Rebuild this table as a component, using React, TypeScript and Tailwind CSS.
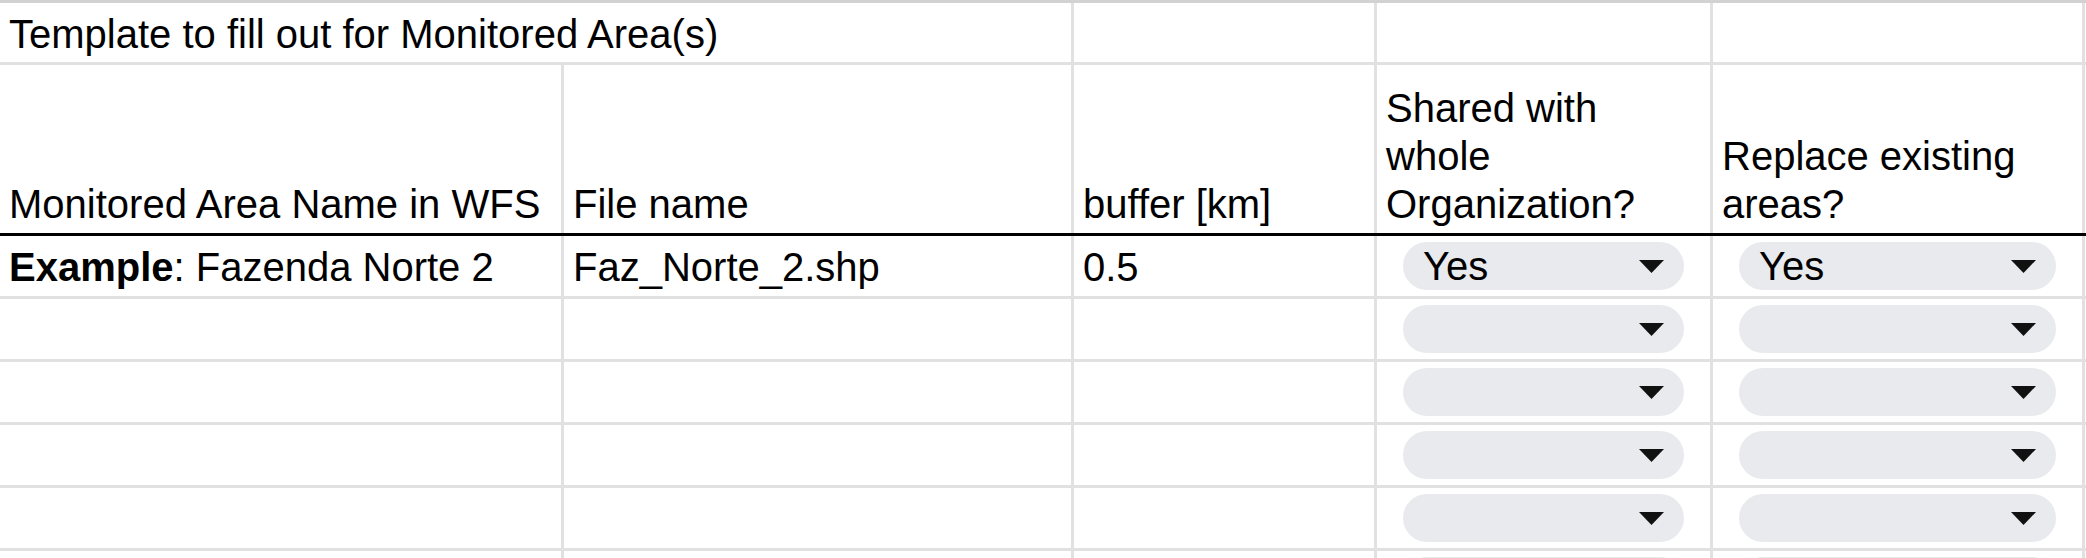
import React from "react";

const columns = [
  "w-[564px] shrink-0 border-r-[3px]",
  "w-[510px] shrink-0 border-r-[3px]",
  "w-[303px] shrink-0 border-r-[3px]",
  "w-[336px] shrink-0 border-r-[3px]",
  "w-[372px] shrink-0 border-r-[3px]",
  "flex-1 min-w-0 overflow-hidden",
];

function Caret() {
  return (
    <svg width="25" height="13" viewBox="0 0 25 13" className="shrink-0">
      <polygon points="0,0 25,0 12.5,13" fill="#111" />
    </svg>
  );
}

function Dropdown({ value }: { value?: string }) {
  return (
    <div className="mx-[26px] my-auto h-[48px] flex-1 rounded-full bg-[#e8eaed] flex items-center justify-between pl-[20px] pr-[20px]">
      <span className="leading-[48px]">{value ?? ""}</span>
      <Caret />
    </div>
  );
}

function Cell({ col, children }: { col: number; children?: React.ReactNode }) {
  const pad = col === 5 ? "" : "px-[9px]";
  return (
    <div className={`${columns[col]} ${pad} border-[#e1e1e1] flex items-end pb-[5px] leading-[48px] whitespace-nowrap`}>
      {children}
    </div>
  );
}

function PillCell({ col, value }: { col: number; value?: string }) {
  return (
    <div className={`${columns[col]} border-[#e1e1e1] flex items-stretch`}>
      <Dropdown value={value} />
    </div>
  );
}

const emptyRows = [1, 2, 3, 4, 5];

export default function App() {
  return (
    <div
      className="h-[558px] w-[2086px] overflow-hidden bg-white text-black text-[40px]"
      style={{ fontFamily: '"Liberation Sans", Arial, sans-serif' }}
    >
      {/* Title row */}
      <div className="flex h-[65px] border-t-[3px] border-b-[3px] border-t-[#d2d2d2] border-b-[#e1e1e1]">
        <div className="w-[1074px] shrink-0 border-r-[3px] border-[#e1e1e1] flex items-end px-[9px] pb-[4px] leading-[48px] whitespace-nowrap">
          Template to fill out for Monitored Area(s)
        </div>
        <Cell col={2} />
        <Cell col={3} />
        <Cell col={4} />
        <Cell col={5} />
      </div>

      {/* Header row */}
      <div className="flex h-[171px] border-b-[3px] border-b-black">
        <Cell col={0}>Monitored Area Name in WFS</Cell>
        <Cell col={1}>File name</Cell>
        <Cell col={2}>buffer [km]</Cell>
        <Cell col={3}>
          <span>
            Shared with
            <br />
            whole
            <br />
            Organization?
          </span>
        </Cell>
        <Cell col={4}>
          <span>
            Replace existing
            <br />
            areas?
          </span>
        </Cell>
        <Cell col={5} />
      </div>

      {/* Example row */}
      <div className="flex h-[63px] border-b-[3px] border-b-[#e1e1e1]">
        <Cell col={0}>
          <span>
            <b>Example</b>: Fazenda Norte 2
          </span>
        </Cell>
        <Cell col={1}>Faz_Norte_2.shp</Cell>
        <Cell col={2}>0.5</Cell>
        <PillCell col={3} value="Yes" />
        <PillCell col={4} value="Yes" />
        <Cell col={5} />
      </div>

      {emptyRows.map((r) => (
        <div key={r} className="flex h-[63px] border-b-[3px] border-b-[#e1e1e1]">
          <Cell col={0} />
          <Cell col={1} />
          <Cell col={2} />
          <PillCell col={3} />
          <PillCell col={4} />
          <Cell col={5} />
        </div>
      ))}
    </div>
  );
}
